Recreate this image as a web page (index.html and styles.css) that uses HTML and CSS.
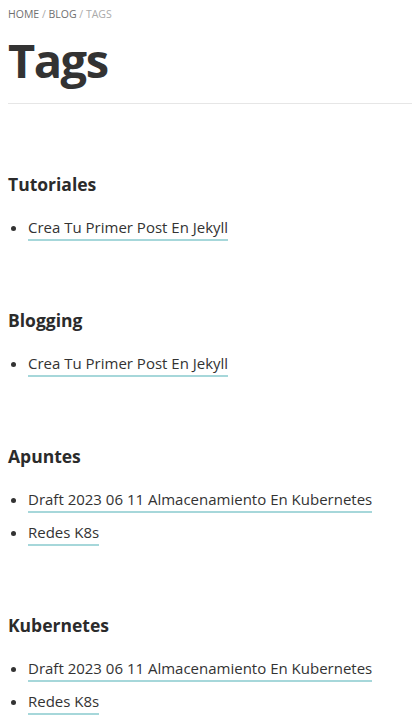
FILE: index.html
```html
<!DOCTYPE html>
<html lang="es">
<head>
<meta charset="utf-8">
<title>Tags</title>
<link rel="stylesheet" href="styles.css">
</head>
<body>
<main class="page">
  <nav class="crumbs"><a href="#" class="crumb">HOME</a><span class="sep"> / </span><a href="#" class="crumb">BLOG</a><span class="sep"> / </span><span class="current">TAGS</span></nav>
  <h1 class="title">Tags</h1>
  <hr class="rule">
  <section class="tag">
    <h2 class="tag-name">Tutoriales</h2>
    <ul class="posts">
      <li><a href="#" class="post">Crea Tu Primer Post En Jekyll</a></li>
    </ul>
  </section>
  <section class="tag">
    <h2 class="tag-name">Blogging</h2>
    <ul class="posts">
      <li><a href="#" class="post">Crea Tu Primer Post En Jekyll</a></li>
    </ul>
  </section>
  <section class="tag">
    <h2 class="tag-name">Apuntes</h2>
    <ul class="posts">
      <li><a href="#" class="post">Draft 2023 06 11 Almacenamiento En Kubernetes</a></li>
      <li><a href="#" class="post">Redes K8s</a></li>
    </ul>
  </section>
  <section class="tag">
    <h2 class="tag-name">Kubernetes</h2>
    <ul class="posts">
      <li><a href="#" class="post">Draft 2023 06 11 Almacenamiento En Kubernetes</a></li>
      <li><a href="#" class="post">Redes K8s</a></li>
    </ul>
  </section>
</main>
</body>
</html>
```

FILE: styles.css
```css
html, body {
  margin: 0;
  padding: 0;
  background: #fff;
}
body {
  font-family: "Open Sans", "Noto Sans", sans-serif;
  color: #333;
}
.page {
  padding: 4px 1px 0 8px;
}
.crumbs {
  font-size: 10.5px;
  line-height: 20px;
  height: 20px;
  color: #aaa;
}
.crumb {
  color: #6f6f6f;
  text-decoration: none;
}
.sep, .current {
  color: #aaa;
}
.title {
  margin: 8px 0 0;
  font-size: 47px;
  line-height: 56px;
  font-weight: 700;
  color: #333;
  letter-spacing: -1.5px;
}
.rule {
  margin: 15px 0 0;
  border: 0;
  border-top: 1px solid #e6e6e6;
  height: 0;
}
.tag {
  margin-top: 68px;
}
.tag + .tag {
  margin-top: 64px;
}
.tag-name {
  margin: 0;
  font-size: 17.5px;
  line-height: 24px;
  font-weight: 700;
  color: #2b2b2b;
}
.posts {
  margin: 15px 0 0;
  padding-left: 20px;
  list-style: disc;
  font-size: 15px;
  line-height: 33px;
}
.post {
  color: #333;
  text-decoration: none;
  padding-bottom: 2px;
  border-bottom: 2px solid #a6d7da;
}
```
